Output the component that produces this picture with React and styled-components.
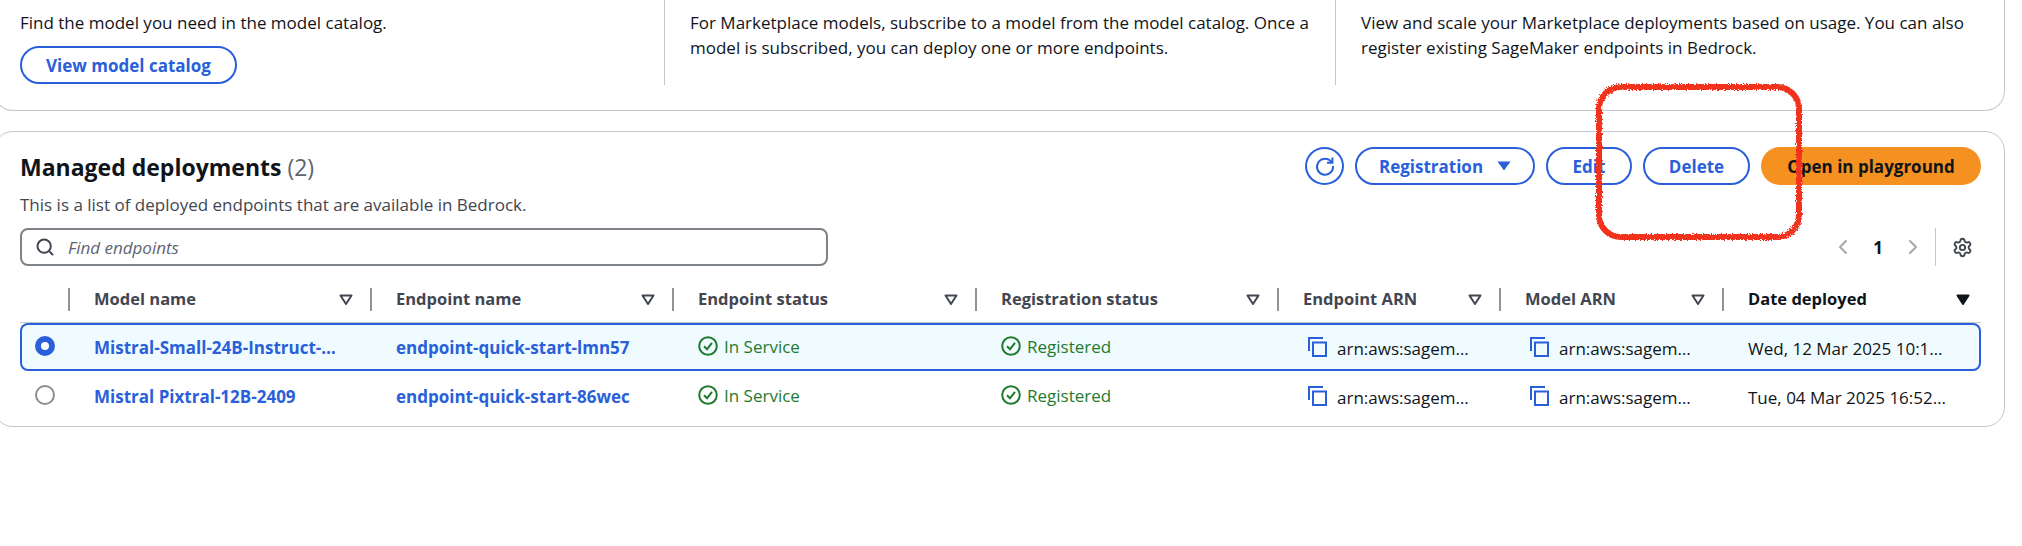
import React from "react";
import styled, { createGlobalStyle } from "styled-components";
import { ChevronLeft, ChevronRight, Search, Settings } from "lucide-react";

const blue = "#295fd9";

const columns = [
  { key: "model", label: "Model name" },
  { key: "endpoint", label: "Endpoint name" },
  { key: "status", label: "Endpoint status" },
  { key: "registration", label: "Registration status" },
  { key: "endpointArn", label: "Endpoint ARN" },
  { key: "modelArn", label: "Model ARN" },
  { key: "date", label: "Date deployed", sorted: true },
];

const rows = [
  {
    model: "Mistral-Small-24B-Instruct-…",
    endpoint: "endpoint-quick-start-lmn57",
    date: "Wed, 12 Mar 2025 10:1…",
    selected: true,
  },
  {
    model: "Mistral Pixtral-12B-2409",
    endpoint: "endpoint-quick-start-86wec",
    date: "Tue, 04 Mar 2025 16:52…",
  },
];

const arn = "arn:aws:sagem…";

export default function App() {
  return (
    <Page>
      <GlobalStyle />
      <StepsCard>
        <Step>
          <p>Find the model you need in the model catalog.</p>
          <PillButton>View model catalog</PillButton>
        </Step>
        <Step>
          <p>
            For Marketplace models, subscribe to a model from the model catalog. Once a model is
            subscribed, you can deploy one or more endpoints.
          </p>
        </Step>
        <Step>
          <p>
            View and scale your Marketplace deployments based on usage. You can also register
            existing SageMaker endpoints in Bedrock.
          </p>
        </Step>
      </StepsCard>

      <TableCard>
        <HeaderRow>
          <Title>
            Managed deployments <Count>(2)</Count>
          </Title>
          <Actions>
            <RefreshButton aria-label="Refresh">
              <RefreshIcon />
            </RefreshButton>
            <PillButton $width={180}>
              Registration <Caret />
            </PillButton>
            <PillButton $width={86}>Edit</PillButton>
            <PillButton $width={107}>Delete</PillButton>
            <PrimaryButton>Open in playground</PrimaryButton>
          </Actions>
        </HeaderRow>
        <Description>This is a list of deployed endpoints that are available in Bedrock.</Description>

        <FilterRow>
          <SearchBox>
            <Search size={20} strokeWidth={2.4} color="#424650" />
            <SearchInput placeholder="Find endpoints" />
          </SearchBox>
          <Pager>
            <ChevronLeft size={24} strokeWidth={2} color="#a4a9b0" />
            <PageNumber>1</PageNumber>
            <ChevronRight size={24} strokeWidth={2} color="#a4a9b0" />
            <PagerDivider />
            <Settings size={21} strokeWidth={2.2} color="#424650" />
          </Pager>
        </FilterRow>

        <HeadRow>
          <HeadCell />
          {columns.map((col) => (
            <HeadCell key={col.key} $divider $sorted={col.sorted}>
              <span>{col.label}</span>
              <SortIcon filled={col.sorted} />
            </HeadCell>
          ))}
        </HeadRow>

        {rows.map((row) => (
          <BodyRow key={row.endpoint} $selected={row.selected}>
            <RadioCell>
              <Radio $selected={row.selected} />
            </RadioCell>
            <Cell>
              <Link>{row.model}</Link>
            </Cell>
            <Cell>
              <Link>{row.endpoint}</Link>
            </Cell>
            <Cell>
              <Status>
                <CheckIcon />
                <StatusText>In Service</StatusText>
              </Status>
            </Cell>
            <Cell>
              <Status>
                <CheckIcon />
                <StatusText>Registered</StatusText>
              </Status>
            </Cell>
            <ArnCell>
              <CopyIcon />
              <Plain>{arn}</Plain>
            </ArnCell>
            <ArnCell>
              <CopyIcon />
              <Plain>{arn}</Plain>
            </ArnCell>
            <Cell>
              <Plain>{row.date}</Plain>
            </Cell>
          </BodyRow>
        ))}
      </TableCard>

      <Scribble viewBox="0 0 208 158" width="208" height="158" aria-hidden="true">
        <filter id="rough" x="-5%" y="-5%" width="110%" height="110%">
          <feTurbulence type="fractalNoise" baseFrequency="0.8" numOctaves="2" seed="4" />
          <feDisplacementMap in="SourceGraphic" scale="4" />
        </filter>
        <rect
          x="4"
          y="4"
          width="200"
          height="150"
          rx="22"
          fill="none"
          stroke="#f2301a"
          strokeWidth="6"
          filter="url(#rough)"
        />
      </Scribble>
    </Page>
  );
}

function RefreshIcon() {
  return (
    <svg width="22" height="22" viewBox="0 0 22 22" fill="none" stroke={blue} strokeWidth="2">
      <path d="M17.6 7.2A8 8 0 1 0 19 11" />
      <path d="M18.4 2.4v5.4H13" strokeLinejoin="miter" />
    </svg>
  );
}

function Caret() {
  return (
    <CaretSvg width="14" height="10" viewBox="0 0 14 10">
      <path d="M0.5 0.5h13L7 9.5z" fill={blue} />
    </CaretSvg>
  );
}

function SortIcon({ filled }) {
  return (
    <svg width="14" height="12" viewBox="0 0 14 12">
      <path
        d="M1.5 1.5h11L7 10z"
        fill={filled ? "#0f141a" : "none"}
        stroke={filled ? "#0f141a" : "#424650"}
        strokeWidth="2"
        strokeLinejoin="round"
      />
    </svg>
  );
}

function CheckIcon() {
  return (
    <svg width="20" height="20" viewBox="0 0 20 20" fill="none" stroke="#1f7a2e" strokeWidth="2">
      <circle cx="10" cy="10" r="8.8" />
      <path d="M6 10.2l3 3 5-6.4" />
    </svg>
  );
}

function CopyIcon() {
  return (
    <CopySvg width="20" height="20" viewBox="0 0 20 20" fill="none" stroke={blue} strokeWidth="2">
      <path d="M1 14V1h14" />
      <rect x="5" y="5.5" width="13" height="13.5" />
    </CopySvg>
  );
}

const GlobalStyle = createGlobalStyle`
  html, body {
    margin: 0;
    background: #fff;
    overflow: hidden;
  }
  body {
    font-family: "Open Sans", "Noto Sans", sans-serif;
    font-size: 17px;
    color: #0f141a;
  }
  * { box-sizing: border-box; }
`;

const Page = styled.div`
  position: relative;
  width: 2012px;
  margin-left: -7px;
`;

const StepsCard = styled.section`
  display: grid;
  grid-template-columns: 644px 671px 1fr;
  height: 111px;
  padding-left: 26px;
  border: 1px solid #c6c6cd;
  border-top: none;
  border-radius: 0 0 20px 20px;
`;

const Step = styled.div`
  height: 85px;
  padding: 10px 20px 0 25px;
  border-left: 1px solid #c6c6cd;
  line-height: 25px;

  &:first-child {
    padding-left: 0;
    border-left: none;
  }
  p {
    margin: 0;
  }
`;

const PillButton = styled.button`
  display: inline-flex;
  align-items: center;
  justify-content: center;
  gap: 14px;
  height: 38px;
  padding: 0;
  width: ${(p) => (p.$width ? `${p.$width}px` : "auto")};
  background: #fff;
  border: 2px solid ${blue};
  border-radius: 19px;
  color: ${blue};
  font: 700 17px "Open Sans", sans-serif;
  white-space: nowrap;

  ${Step} & {
    margin-top: 11px;
    width: 217px;
  }
`;

const CaretSvg = styled.svg`
  flex-shrink: 0;
`;

const PrimaryButton = styled.button`
  height: 38px;
  width: 220px;
  padding: 0;
  background: #f59120;
  border: none;
  border-radius: 19px;
  color: #0f141a;
  font: 700 17px "Open Sans", sans-serif;
  white-space: nowrap;
`;

const RefreshButton = styled.button`
  display: flex;
  align-items: center;
  justify-content: center;
  width: 39px;
  height: 38px;
  padding: 0;
  background: #fff;
  border: 2px solid ${blue};
  border-radius: 50%;
`;

const TableCard = styled.section`
  margin-top: 20px;
  height: 296px;
  padding: 15px 23px 0 26px;
  border: 1px solid #c6c6cd;
  border-radius: 20px;
`;

const HeaderRow = styled.div`
  display: flex;
  justify-content: space-between;
  align-items: flex-start;
`;

const Title = styled.h2`
  margin: 5px 0 0;
  font-size: 23px;
  line-height: 30px;
  font-weight: 700;
`;

const Count = styled.span`
  font-weight: 400;
  color: #5f6470;
`;

const Actions = styled.div`
  display: flex;
  gap: 11px;
`;

const Description = styled.p`
  margin: 8px 0 0;
  line-height: 24px;
  color: #424650;
`;

const FilterRow = styled.div`
  display: flex;
  justify-content: space-between;
  margin-top: 11px;
`;

const SearchBox = styled.label`
  display: flex;
  align-items: center;
  gap: 11px;
  width: 808px;
  height: 38px;
  padding-left: 13px;
  border: 2px solid #7d8189;
  border-radius: 8px;
`;

const SearchInput = styled.input`
  flex: 1;
  border: none;
  outline: none;
  background: none;
  font: italic 400 17px "Open Sans", sans-serif;
  color: #0f141a;

  &::placeholder {
    color: #5f6470;
    opacity: 1;
  }
`;

const Pager = styled.div`
  display: flex;
  align-items: center;
  height: 38px;
  padding-right: 8px;
`;

const PageNumber = styled.span`
  width: 46px;
  text-align: center;
  font-weight: 700;
`;

const PagerDivider = styled.span`
  width: 1px;
  height: 38px;
  margin: 0 16px 0 10px;
  background: #c6c6cd;
`;

const tableColumns = "48px 302px 302px 303px 302px 222px 223px 1fr";

const HeadRow = styled.div`
  display: grid;
  grid-template-columns: ${tableColumns};
  width: 1961px;
  height: 35px;
  margin-top: 22px;
  padding-bottom: 11px;
  border-bottom: 1px solid #c6c6cd;
`;

const HeadCell = styled.div`
  display: flex;
  align-items: center;
  justify-content: space-between;
  padding: 0 ${(p) => (p.$sorted ? "11px" : "17px")} 0 24px;
  border-left: ${(p) => (p.$divider ? "2px solid #8f939b" : "none")};
  color: ${(p) => (p.$sorted ? "#0f141a" : "#424650")};
  font-size: 16.5px;
  font-weight: 700;
  white-space: nowrap;

  span {
    margin-top: -2px;
  }
`;

const BodyRow = styled.div`
  display: grid;
  grid-template-columns: ${tableColumns};
  align-items: center;
  width: 1961px;
  height: 48px;
  margin-bottom: 1px;
  border-radius: 8px;
  background: ${(p) => (p.$selected ? "#f0fbff" : "transparent")};
  box-shadow: ${(p) => (p.$selected ? `inset 0 0 0 2px ${blue}` : "none")};
`;

const Cell = styled.div`
  padding: 0 26px;
  white-space: nowrap;
`;

const RadioCell = styled.div`
  display: flex;
  padding: 0 0 2px 15px;
`;

const Radio = styled.span`
  width: 20px;
  height: 20px;
  border-radius: 50%;
  background: #fff;
  border: ${(p) => (p.$selected ? `6px solid ${blue}` : "2px solid #8c8c94")};
`;

const Link = styled.a`
  color: ${blue};
  font-weight: 700;
`;

const Status = styled.span`
  display: inline-flex;
  align-items: center;
  gap: 6px;
  color: #1f7a2e;
`;

const StatusText = styled.span`
  padding-top: 2px;
`;

const ArnCell = styled(Cell)`
  display: flex;
  align-items: center;
  gap: 9px;
  padding-left: 31px;
`;

const CopySvg = styled.svg`
  flex-shrink: 0;
`;

const Plain = styled.span`
  display: block;
  padding-top: 2px;
`;

const Scribble = styled.svg`
  position: absolute;
  left: 1602px;
  top: 83px;
  pointer-events: none;
`;
